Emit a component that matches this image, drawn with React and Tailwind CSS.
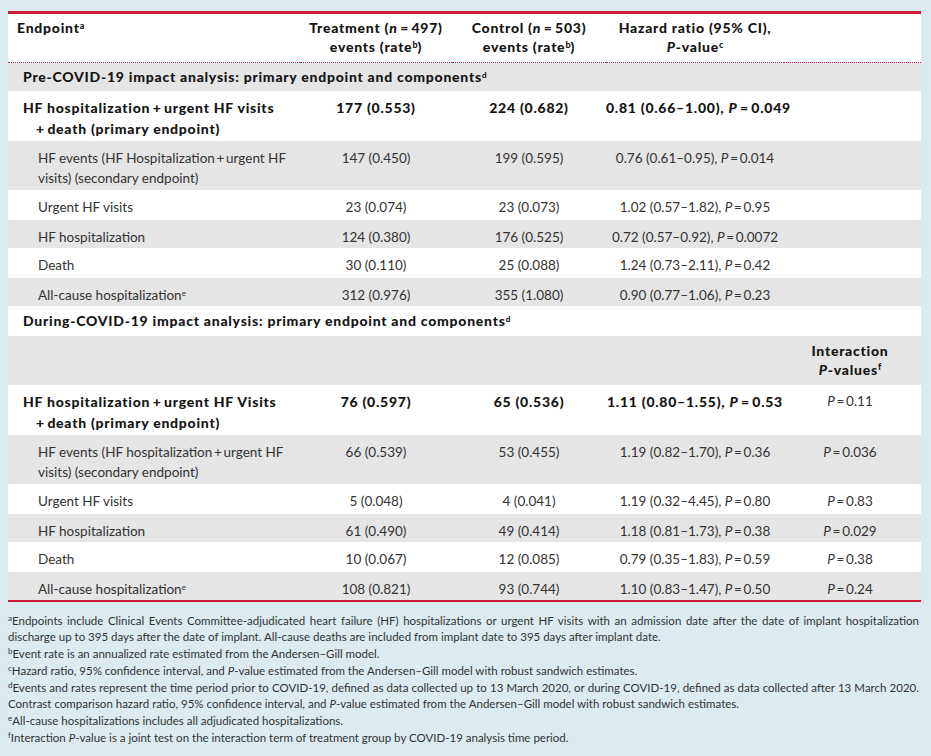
const PRE = [
  { label: ['HF events (HF Hospitalization\u2009+\u2009urgent HF', 'visits) (secondary endpoint)'], t: '147 (0.450)', c: '199 (0.595)', hr: ['0.76 (0.61–0.95), ', '0.014'], h: 'h-[49px]', bg: 'bg-[#e5e5e5]' },
  { label: ['Urgent HF visits'], t: '23 (0.074)', c: '23 (0.073)', hr: ['1.02 (0.57–1.82), ', '0.95'], h: 'h-[30px]', bg: 'bg-white' },
  { label: ['HF hospitalization'], t: '124 (0.380)', c: '176 (0.525)', hr: ['0.72 (0.57–0.92), ', '0.0072'], h: 'h-[28px]', bg: 'bg-[#e5e5e5]' },
  { label: ['Death'], t: '30 (0.110)', c: '25 (0.088)', hr: ['1.24 (0.73–2.11), ', '0.42'], h: 'h-[30px]', bg: 'bg-white' },
  { label: ['All-cause hospitalization'], sup: 'e', t: '312 (0.976)', c: '355 (1.080)', hr: ['0.90 (0.77–1.06), ', '0.23'], h: 'h-[28px]', bg: 'bg-[#e5e5e5]' },
];

const DURING = [
  { label: ['HF events (HF hospitalization\u2009+\u2009urgent HF', 'visits) (secondary endpoint)'], t: '66 (0.539)', c: '53 (0.455)', hr: ['1.19 (0.82–1.70), ', '0.36'], p: '0.036', h: 'h-[49px]', bg: 'bg-[#e5e5e5]' },
  { label: ['Urgent HF visits'], t: '5 (0.048)', c: '4 (0.041)', hr: ['1.19 (0.32–4.45), ', '0.80'], p: '0.83', h: 'h-[30px]', bg: 'bg-white' },
  { label: ['HF hospitalization'], t: '61 (0.490)', c: '49 (0.414)', hr: ['1.18 (0.81–1.73), ', '0.38'], p: '0.029', h: 'h-[28px]', bg: 'bg-[#e5e5e5]' },
  { label: ['Death'], t: '10 (0.067)', c: '12 (0.085)', hr: ['0.79 (0.35–1.83), ', '0.59'], p: '0.38', h: 'h-[30px]', bg: 'bg-white' },
  { label: ['All-cause hospitalization'], sup: 'e', t: '108 (0.821)', c: '93 (0.744)', hr: ['1.10 (0.83–1.47), ', '0.50'], p: '0.24', h: 'h-[28px]', bg: 'bg-[#e5e5e5]' },
];

// bold cells: heavier + tracked, to get the width of the journal's bold face
const BOLD = 'font-black text-[14px] tracking-[0.75px] text-[#151515]';

const Pv = ({ v }) => (
  <>
    <i>P</i>{'\u2009=\u2009'}{v}
  </>
);

const Sup = ({ children, bold }) => (
  <sup className={bold ? 'text-[9px] font-black tracking-normal' : 'text-[8px] tracking-normal'}>{children}</sup>
);

function SubRow({ r, withP }) {
  return (
    <tr className={`${r.bg} ${r.h} align-top text-[#333]`}>
      <td className="pl-[30px] pt-[7px] whitespace-nowrap">
        {r.label.map((l, i) => (
          <div key={i}>
            {l}
            {r.sup && i === r.label.length - 1 && <Sup>{r.sup}</Sup>}
          </div>
        ))}
      </td>
      <td className="pt-[7px] text-center">{r.t}</td>
      <td className="pt-[7px] text-center">{r.c}</td>
      <td className="pt-[7px] text-center whitespace-nowrap">
        {r.hr[0]}<Pv v={r.hr[1]} />
      </td>
      <td className="pt-[7px] pr-[5px] text-center">{withP && <Pv v={r.p} />}</td>
    </tr>
  );
}

function PrimaryRow({ plus, t, c, hr, p }) {
  return (
    <tr className={`bg-white h-[50px] align-top leading-[21px] ${BOLD}`}>
      <td className="pl-[15px] pt-[6px] whitespace-nowrap">
        <div>HF hospitalization{'\u2009+\u2009'}urgent HF {plus}</div>
        <div className="pl-[13px]">+{'\u2009'}death (primary endpoint)</div>
      </td>
      <td className="pt-[6px] text-center">{t}</td>
      <td className="pt-[6px] text-center">{c}</td>
      <td className="pt-[6px] text-center whitespace-nowrap">
        {hr[0]}<Pv v={hr[1]} />
      </td>
      <td className="pt-[6px] pr-[5px] text-center font-normal text-[13.5px] tracking-normal text-[#333]">{p && <Pv v={p} />}</td>
    </tr>
  );
}

export default function App() {
  return (
    <div className="min-h-screen bg-[#dbebf0] pl-[8px] pr-[10px] pt-[11px] font-['Lato',sans-serif]">
      <table className="w-full table-fixed border-collapse text-[13.5px] leading-[20px]">
        <colgroup>
          <col className="w-[292px]" />
          <col className="w-[152px]" />
          <col className="w-[154px]" />
          <col className="w-[178px]" />
          <col />
        </colgroup>
        <thead>
          <tr className={`bg-white h-[50px] align-top border-t-[3px] border-[#cf1b3c] leading-[19px] ${BOLD}`}>
            <th className="pl-[9px] pt-[4px] text-left font-black">
              Endpoint<Sup bold>a</Sup>
            </th>
            <th className="pt-[4px] text-center font-black whitespace-nowrap">
              <div>Treatment (<i>n</i>{'\u2009=\u2009'}497)</div>
              <div>events (rate<Sup bold>b</Sup>)</div>
            </th>
            <th className="pt-[4px] text-center font-black whitespace-nowrap">
              <div>Control (<i>n</i>{'\u2009=\u2009'}503)</div>
              <div>events (rate<Sup bold>b</Sup>)</div>
            </th>
            <th className="pt-[4px] text-center font-black whitespace-nowrap">
              <div>Hazard ratio (95% CI),</div>
              <div><i>P</i>-value<Sup bold>c</Sup></div>
            </th>
            <th />
          </tr>
        </thead>
        <tbody>
          <tr className={`bg-[#e5e5e5] h-[28px] border-t border-dotted border-[#cf1b3c] ${BOLD}`}>
            <td colSpan={5} className="pl-[15px] whitespace-nowrap">
              Pre-COVID-19 impact analysis: primary endpoint and components<Sup>d</Sup>
            </td>
          </tr>
          <PrimaryRow plus="visits" t="177 (0.553)" c="224 (0.682)" hr={['0.81 (0.66–1.00), ', '0.049']} />
          {PRE.map((r, i) => <SubRow key={i} r={r} />)}
          <tr className={`bg-white h-[30px] ${BOLD}`}>
            <td colSpan={5} className="pl-[15px] whitespace-nowrap">
              During-COVID-19 impact analysis: primary endpoint and components<Sup>d</Sup>
            </td>
          </tr>
          <tr className={`bg-[#e5e5e5] h-[49px] align-top leading-[19px] ${BOLD}`}>
            <td colSpan={4} />
            <td className="pt-[5px] pr-[5px] text-center whitespace-nowrap">
              <div>Interaction</div>
              <div><i>P</i>-values<Sup bold>f</Sup></div>
            </td>
          </tr>
          <PrimaryRow plus="Visits" t="76 (0.597)" c="65 (0.536)" hr={['1.11 (0.80–1.55), ', '0.53']} p="0.11" />
          {DURING.map((r, i) => <SubRow key={i} r={r} withP />)}
        </tbody>
      </table>
      <div className="border-t-[2px] border-[#cf1b3c]" />

      <div className="mt-[11px] mr-[2px] text-[11.5px] leading-[16.8px] text-[#333] whitespace-nowrap">
        <div className="text-justify [text-align-last:justify]">
          <Sup>a</Sup>Endpoints include Clinical Events Committee-adjudicated heart failure (HF) hospitalizations or urgent HF visits with an admission date after the date of implant hospitalization
        </div>
        <div>discharge up to 395 days after the date of implant. All-cause deaths are included from implant date to 395 days after implant date.</div>
        <div><Sup>b</Sup>Event rate is an annualized rate estimated from the Andersen–Gill model.</div>
        <div><Sup>c</Sup>Hazard ratio, 95% confidence interval, and <i>P</i>-value estimated from the Andersen–Gill model with robust sandwich estimates.</div>
        <div className="text-justify [text-align-last:justify]">
          <Sup>d</Sup>Events and rates represent the time period prior to COVID-19, defined as data collected up to 13 March 2020, or during COVID-19, defined as data collected after 13 March 2020.
        </div>
        <div>Contrast comparison hazard ratio, 95% confidence interval, and <i>P</i>-value estimated from the Andersen–Gill model with robust sandwich estimates.</div>
        <div><Sup>e</Sup>All-cause hospitalizations includes all adjudicated hospitalizations.</div>
        <div><Sup>f</Sup>Interaction <i>P</i>-value is a joint test on the interaction term of treatment group by COVID-19 analysis time period.</div>
      </div>
    </div>
  );
}
